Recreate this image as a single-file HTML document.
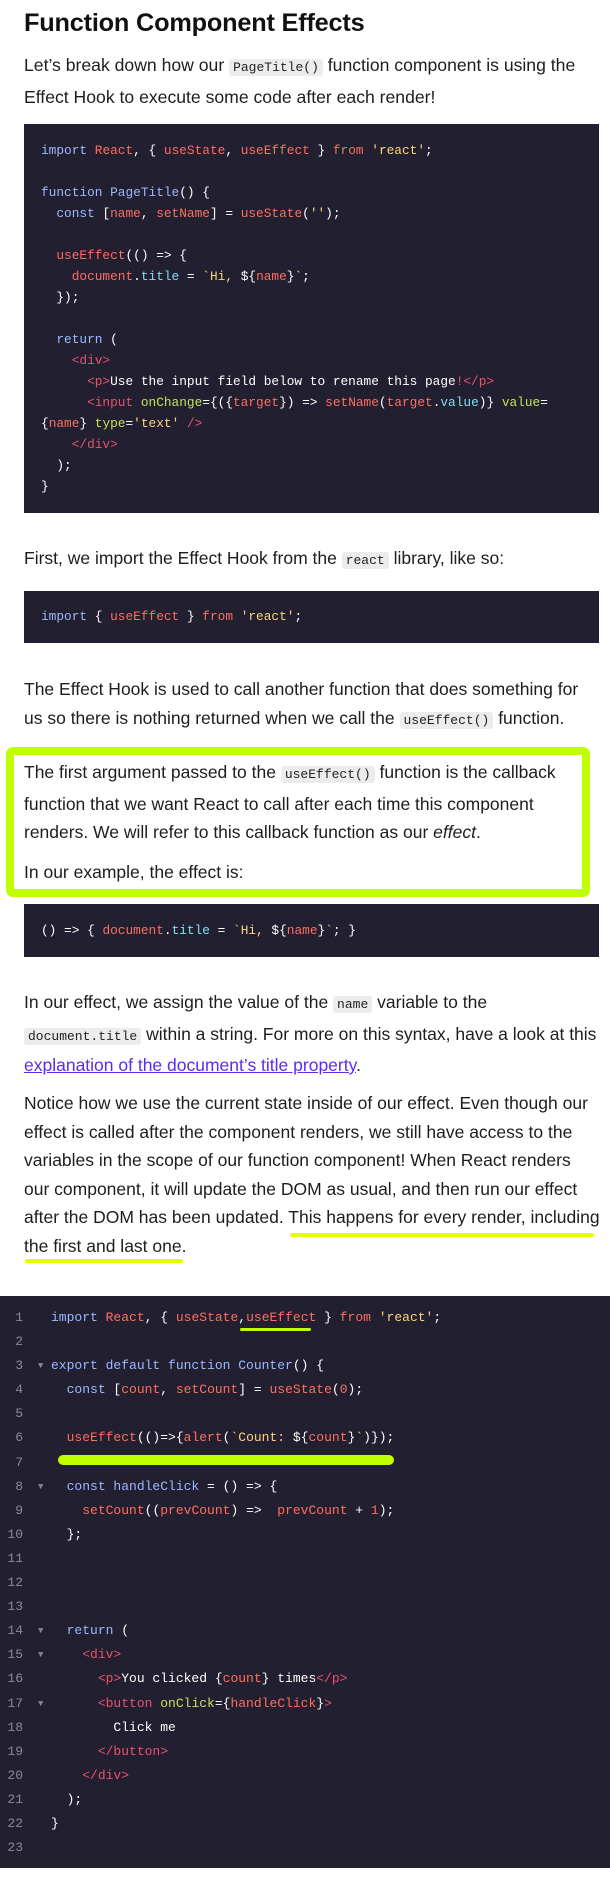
<!DOCTYPE html>
<html><head><meta charset="utf-8">
<style>
*{margin:0;padding:0;box-sizing:border-box}
body{width:610px;height:1880px;background:#fff;font-family:"Liberation Sans",sans-serif;color:#1d1d1f;position:relative;overflow:hidden}
h1{position:absolute;left:24px;top:9px;font-size:25.3px;font-weight:bold;color:#111;letter-spacing:-0.2px}
p{position:absolute;left:24px;font-size:17.5px;line-height:28.5px;white-space:nowrap}
code.i{font-family:"Liberation Mono",monospace;font-size:13px;background:#ececee;padding:1px 4px;border-radius:3px;color:#222}
.cb{position:absolute;left:24px;width:575px;background:#211f30;font-family:"Liberation Mono",monospace;font-size:12.8px;line-height:21px;color:#fff;padding:0 17px;white-space:pre}
.k{color:#9fb8ff}.r{color:#ff6e60}.y{color:#ffd479}.c{color:#7fe0f0}.g{color:#c4e35a}.t{color:#e8526f}
.box{position:absolute;left:6px;top:747px;width:584px;height:150px;border:8px solid #bfff00;border-radius:7px}
.ul{position:absolute;background:#e6ff00;height:4px;border-radius:2px}
.big{position:absolute;left:0;top:1296px;width:610px;height:572px;background:#211f30;font-family:"Liberation Mono",monospace;font-size:13px;line-height:24.1px;color:#fff}
.ln{position:absolute;left:0;top:10px;width:23px;text-align:right;color:#8a8a98;white-space:pre}
.fd{position:absolute;left:38px;top:10px;color:#888;font-size:9px;line-height:24.1px;white-space:pre}
.src{position:absolute;left:51px;top:10px;white-space:pre}
</style></head><body>
<h1>Function Component Effects</h1>
<p style="top:51px;font-size:17.6px">Let’s break down how our <code class="i">PageTitle()</code> function component is using the<br>Effect Hook to execute some code after each render!</p>

<div class="cb" style="top:124px;height:389px;padding-top:16px"><span class="k">import</span> <span class="r">React</span>, { <span class="r">useState</span>, <span class="r">useEffect</span> } <span class="r">from</span> <span class="y">'react'</span>;

<span class="k">function</span> <span class="k">PageTitle</span>() {
  <span class="k">const</span> [<span class="r">name</span>, <span class="r">setName</span>] = <span class="r">useState</span>(<span class="y">''</span>);

  <span class="r">useEffect</span>(() =&gt; {
    <span class="r">document</span>.<span class="c">title</span> = <span class="y">`Hi, </span>${<span class="r">name</span>}<span class="y">`</span>;
  });

  <span class="k">return</span> (
    <span class="t">&lt;div&gt;</span>
      <span class="t">&lt;p&gt;</span>Use the input field below to rename this page<span class="t">!&lt;/p&gt;</span>
      <span class="t">&lt;input</span> <span class="g">onChange</span>={({<span class="r">target</span>}) =&gt; <span class="r">setName</span>(<span class="r">target</span>.<span class="c">value</span>)} <span class="g">value</span>=
{<span class="r">name</span>} <span class="g">type</span>=<span class="y">'text'</span> <span class="t">/&gt;</span>
    <span class="t">&lt;/div&gt;</span>
  );
}</div>

<p style="top:544px">First, we import the Effect Hook from the <code class="i">react</code> library, like so:</p>
<div class="cb" style="top:591px;height:52px;line-height:52px"><span class="k">import</span> { <span class="r">useEffect</span> } <span class="r">from</span> <span class="y">'react'</span>;</div>

<p style="top:675px">The Effect Hook is used to call another function that does something for<br>us so there is nothing returned when we call the <code class="i">useEffect()</code> function.</p>

<div class="box"></div>
<p style="top:758px">The first argument passed to the <code class="i">useEffect()</code> function is the callback<br>function that we want React to call after each time this component<br>renders. We will refer to this callback function as our <i>effect</i>.</p>
<p style="top:858px">In our example, the effect is:</p>
<div class="cb" style="top:904px;height:53px;line-height:53px">() =&gt; { <span class="r">document</span>.<span class="c">title</span> = <span class="y">`Hi, </span>${<span class="r">name</span>}<span class="y">`</span>; }</div>

<p style="top:988px">In our effect, we assign the value of the <code class="i">name</code> variable to the<br><code class="i">document.title</code> within a string. For more on this syntax, have a look at this<br><span style="color:#5b2cf0;text-decoration:underline">explanation of the document’s title property</span>.</p>
<p style="top:1089px">Notice how we use the current state inside of our effect. Even though our<br>effect is called after the component renders, we still have access to the<br>variables in the scope of our function component! When React renders<br>our component, it will update the DOM as usual, and then run our effect<br>after the DOM has been updated. This happens for every render, including<br>the first and last one.</p>
<div class="ul" style="left:290px;top:1233px;width:304px"></div>
<div class="ul" style="left:25px;top:1259px;width:158px"></div>

<div class="big">
<div class="ln">1
2
3
4
5
6
7
8
9
10
11
12
13
14
15
16
17
18
19
20
21
22
23</div>
<div class="fd">

▼




▼





▼
▼

▼</div>
<div class="src"><span class="k">import</span> <span class="r">React</span>, { <span class="r">useState</span>,<span class="r">useEffect</span> } <span class="r">from</span> <span class="y">'react'</span>;

<span class="k">export default function Counter</span>() {
  <span class="k">const</span> [<span class="r">count</span>, <span class="r">setCount</span>] = <span class="r">useState</span>(<span class="r">0</span>);

  <span class="r">useEffect</span>(()=&gt;{<span class="r">alert</span>(<span class="y">`Count: </span>${<span class="r">count</span>}<span class="y">`</span>)});

  <span class="k">const handleClick</span> = () =&gt; {
    <span class="r">setCount</span>((<span class="r">prevCount</span>) =&gt;  <span class="r">prevCount</span> + <span class="r">1</span>);
  };



  <span class="k">return</span> (
    <span class="t">&lt;div&gt;</span>
      <span class="t">&lt;p&gt;</span>You clicked {<span class="r">count</span>} times<span class="t">&lt;/p&gt;</span>
      <span class="t">&lt;button</span> <span class="g">onClick</span>={<span class="r">handleClick</span>}<span class="t">&gt;</span>
        Click me
      <span class="t">&lt;/button&gt;</span>
    <span class="t">&lt;/div&gt;</span>
  );
}</div>
<div style="position:absolute;left:240px;top:32px;width:71px;height:3px;background:#bfff00;border-radius:2px"></div>
<div style="position:absolute;left:58px;top:159px;width:336px;height:10px;background:#bfff00;border-radius:5px"></div>
</div>
</body></html>
